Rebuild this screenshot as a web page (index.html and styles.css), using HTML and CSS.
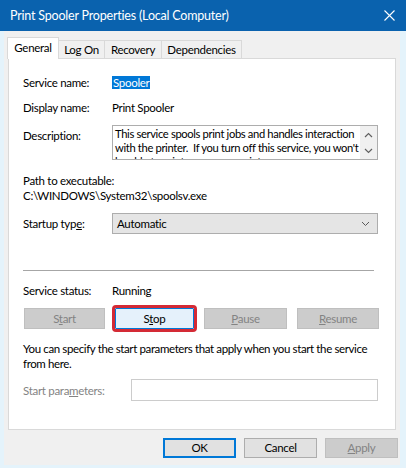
FILE: index.html
```html
<!DOCTYPE html>
<html>
<head>
<meta charset="utf-8">
<link rel="stylesheet" href="styles.css">
</head>
<body>
<div class="window">
  <div class="titlebar">
    <span class="title">Print Spooler Properties (Local Computer)</span>
    <svg class="close" width="11" height="11" viewBox="0 0 11 11"><path d="M0.5 0.5 L10.5 10.5 M10.5 0.5 L0.5 10.5" stroke="#ffffff" stroke-width="1.1" fill="none"/></svg>
  </div>
  <div class="frame">
    <div class="tabs">
      <div class="tab active t-general">General</div>
      <div class="tab t-logon">Log On</div>
      <div class="tab t-recovery">Recovery</div>
      <div class="tab t-deps">Dependencies</div>
    </div>
    <div class="panel">
      <div class="row r-name"><span class="label">Service name:</span><span class="sel">Spooler</span></div>
      <div class="row r-display"><span class="label">Display name:</span><span>Print Spooler</span></div>
      <div class="row r-desc">
        <span class="label desc-label">Description:</span>
        <div class="desc">
          <div class="desc-text">This service spools print jobs and handles interaction<br>with the printer.&nbsp; If you turn off this service, you won't<br>be able to print or see your printers.</div>
          <div class="vscroll">
            <svg width="9" height="6" viewBox="0 0 9 6"><path d="M1 5 L4.5 1.5 L8 5" stroke="#606060" stroke-width="1.2" fill="none"/></svg>
            <svg width="9" height="6" viewBox="0 0 9 6"><path d="M1 1 L4.5 4.5 L8 1" stroke="#606060" stroke-width="1.2" fill="none"/></svg>
          </div>
        </div>
      </div>
      <div class="line r-path">Path to executable:</div>
      <div class="line">C:\WINDOWS\System32\spoolsv.exe</div>
      <div class="row r-startup">
        <span class="label">Startup typ<u>e</u>:</span>
        <div class="select">
          <span>Automatic</span>
          <svg width="9" height="6" viewBox="0 0 9 6"><path d="M1 1 L4.5 4.5 L8 1" stroke="#5a5a5a" stroke-width="1" fill="none"/></svg>
        </div>
      </div>
      <div class="sep"></div>
      <div class="row r-status"><span class="label">Service status:</span><span>Running</span></div>
      <div class="btnrow">
        <div class="btn disabled">S<u>t</u>art</div>
        <div class="btn focus">S<u>t</u>op</div>
        <div class="btn disabled"><u>P</u>ause</div>
        <div class="btn disabled"><u>R</u>esume</div>
      </div>
      <div class="note">You can specify the start parameters that apply when you start the service from here.</div>
      <div class="row r-params">
        <span class="label params-label">Start para<u>m</u>eters:</span>
        <div class="input"></div>
      </div>
    </div>
    <div class="footer">
      <div class="dbtn default">OK</div>
      <div class="dbtn">Cancel</div>
      <div class="dbtn off"><u>A</u>pply</div>
    </div>
  </div>
</div>
</body>
</html>
```

FILE: styles.css
```css
* { box-sizing: border-box; }
html, body { margin: 0; padding: 0; }
body {
  width: 406px;
  height: 468px;
  overflow: hidden;
  background: #e4f3fb;
  font-family: Lato, "Noto Sans", sans-serif;
  font-size: 11.5px;
  letter-spacing: -0.3px;
  color: #000;
}
.window {
  display: flex;
  flex-direction: column;
  height: 468px;
}
.titlebar {
  height: 31px;
  background: #0a62ae;
  color: #fff;
  display: flex;
  align-items: center;
  justify-content: space-between;
  padding: 0 11px 0 10px;
  flex: none;
}
.title { font-size: 12.5px; letter-spacing: -0.2px; padding-bottom: 1px; }
.close { display: block; margin-top: -1px; }
.frame {
  height: 434px;
  margin: 0 6px 0 4px;
  background: #f0f0f0;
  padding: 6px 4px 0 4px;
  display: flex;
  flex-direction: column;
}
.tabs {
  display: flex;
  align-items: flex-end;
  margin-left: -1px;
  height: 21px;
  position: relative;
  z-index: 1;
}
.tab {
  height: 18px;
  border: 1px solid #d9d9d9;
  border-left: none;
  border-bottom: none;
  background: #f0f0f0;
  text-align: center;
  line-height: 17px;
}
.tab.active {
  height: 22px;
  margin-bottom: -1px;
  background: #fff;
  border-left: 1px solid #d9d9d9;
  line-height: 19px;
}
.t-general { width: 52px; }
.t-logon { width: 46px; }
.t-recovery { width: 57px; }
.t-deps { width: 80px; }
.panel {
  height: 372px;
  background: #fff;
  border: 1px solid #d9d9d9;
  padding: 0 17px 0 14px;
  display: flex;
  flex-direction: column;
}
.row {
  display: flex;
  align-items: center;
}
.label {
  width: 89px;
  flex: none;
}
.line { line-height: 15px; }
.r-name { margin-top: 16px; height: 14px; }
.sel {
  display: inline-block;
  background: #0078d7;
  color: #fff;
  height: 13px;
  line-height: 13px;
  padding: 0 1px;
}
.r-display { margin-top: 11px; height: 14px; }
.r-desc { margin-top: 11px; align-items: flex-start; }
.desc-label { padding-top: 4px; }
.desc {
  flex: 1;
  height: 35px;
  border: 1px solid #adadad;
  display: flex;
  overflow: hidden;
}
.desc-text {
  flex: 1;
  min-width: 0;
  padding: 1px 0 0 2px;
  line-height: 14px;
  white-space: nowrap;
  overflow: hidden;
  font-size: 11.2px;
  letter-spacing: -0.35px;
}
.vscroll {
  width: 17px;
  flex: none;
  background: #f0f0f0;
  display: flex;
  flex-direction: column;
  justify-content: space-between;
  align-items: center;
  padding: 6px 0 5px;
}
.vscroll svg { display: block; }
.r-path { margin-top: 13px; }
.r-startup { margin-top: 10px; height: 21px; }
.select {
  flex: 1;
  height: 21px;
  background: #e5e5e5;
  border: 1px solid #adadad;
  display: flex;
  align-items: center;
  justify-content: space-between;
  padding: 0 7px 0 4px;
}
.select svg { display: block; }
.sep {
  margin-top: 36px;
  height: 1px;
  background: #a6a6a6;
  margin-right: 4px;
}
.r-status { margin-top: 12px; height: 14px; }
.btnrow {
  margin-top: 11px;
  display: grid;
  grid-template-columns: 81px 79px 83px 82px;
  column-gap: 10px;
  padding-left: 1px;
}
.btn {
  height: 21px;
  border: 1px solid #bfbfbf;
  background: #cccccc;
  color: #838383;
  text-align: center;
  line-height: 19px;
}
.btn.focus {
  background: #e5f1fb;
  border: 1px solid #0078d7;
  color: #000;
  outline: 3px solid #d42a35;
  outline-offset: 0;
  border-radius: 1px;
}
.note {
  margin-top: 12px;
  line-height: 15px;
  letter-spacing: -0.38px;
}
.r-params { margin-top: 8px; height: 22px; }
.params-label { width: 108px; color: #838383; }
.input {
  flex: 1;
  height: 22px;
  border: 1px solid #cccccc;
  background: #fff;
}
.footer {
  display: flex;
  justify-content: flex-end;
  gap: 8px;
  padding: 8px 0 0 0;
  margin-right: -2px;
}
.dbtn {
  width: 73px;
  height: 20px;
  border: 1px solid #adadad;
  background: #e1e1e1;
  text-align: center;
  line-height: 18px;
}
.dbtn.default {
  border: 2px solid #0078d7;
  line-height: 16px;
}
.dbtn.off {
  background: #cccccc;
  border-color: #bfbfbf;
  color: #838383;
}
```
